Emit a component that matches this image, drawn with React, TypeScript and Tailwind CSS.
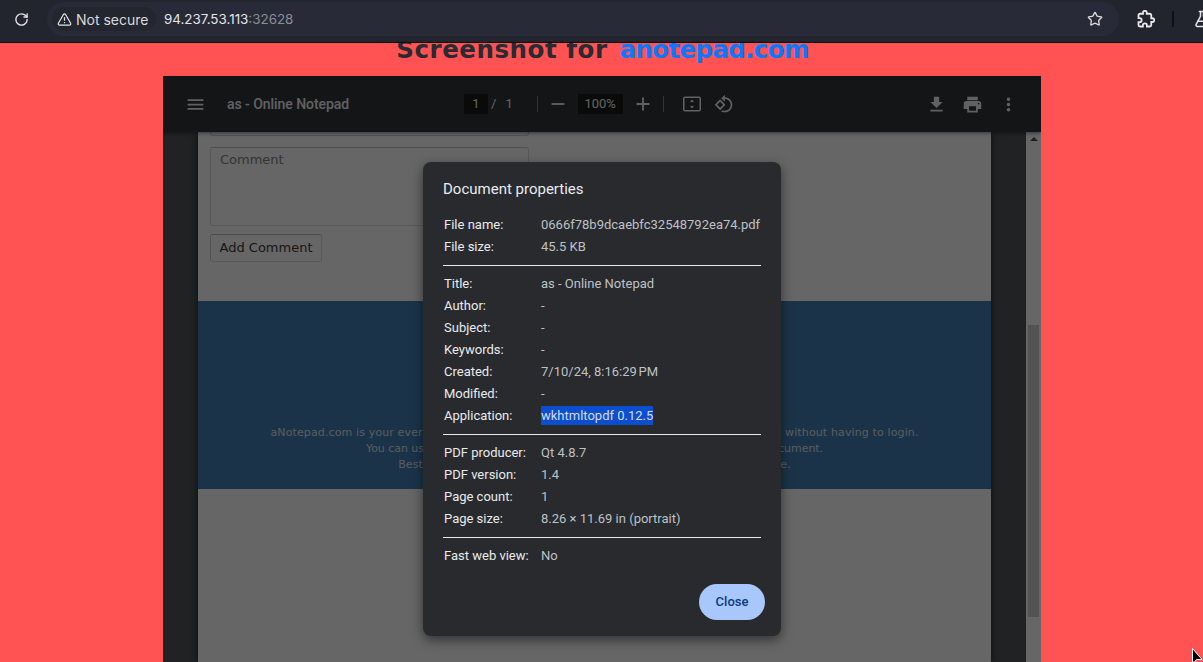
import { RotateCw, TriangleAlert, Star, FlaskConical } from "lucide-react";

const Row = ({ k, v, sel }: { k: string; v: string; sel?: boolean }) => (
  <div className="flex h-[22px] items-center pl-px">
    <div className="w-[97px] shrink-0 text-[#e8eaed]">{k}</div>
    <div className="whitespace-nowrap text-[#bdc1c6]">
      {sel ? <span className="bg-[#0b4fd0] py-[2px] text-[#d6dbe6]">{v}</span> : v}
    </div>
  </div>
);

const Hr = () => <div className="mb-[7px] mt-[7px] h-px bg-[#e8eaed]" />;

const Ico = ({ d, size = 24 }: { d: string; size?: number }) => (
  <svg width={size} height={size} viewBox="0 0 24 24" fill="#f1f3f4">
    <path d={d} />
  </svg>
);

export default function App() {
  return (
    <div className="relative flex h-[662px] w-[1203px] flex-col overflow-hidden bg-[#ff5252] font-['Roboto',sans-serif]">
      {/* browser bar */}
      <div className="z-20 flex h-[43px] shrink-0 items-start overflow-hidden border-b border-[#0c0d10] bg-[#22252e] pt-[2px] text-[#e3e4e8]">
        <div className="flex h-[34px] w-[43px] shrink-0 items-center justify-center">
          <RotateCw size={15} strokeWidth={2.2} className="text-[#e3e4e8]" />
        </div>
        <div className="ml-[4px] flex h-[34px] w-[1072px] shrink-0 items-center rounded-full bg-[#282b37] pl-[5px] pr-[16px] font-['Inter',sans-serif] text-[14px]">
          <div className="flex h-[24px] w-[104px] items-center gap-[4px] rounded-full bg-[#23262f] pl-[5px]">
            <TriangleAlert size={15} strokeWidth={2} />
            <span className="whitespace-nowrap text-[#d8d9de]">Not secure</span>
          </div>
          <div className="ml-[8px] whitespace-nowrap text-[13.4px]">
            94.237.53.113<span className="text-[#8b8d95]">:32628</span>
          </div>
          <Star size={16} strokeWidth={2} className="ml-auto text-[#d8d9de]" />
        </div>
        <div className="ml-[18px] flex h-[34px] shrink-0 items-center">
          <svg width="18" height="18" viewBox="0 0 24 24" fill="none" stroke="#e8e9ec" strokeWidth="2.4">
            <path d="M20.5 11H19V7c0-1.1-.9-2-2-2h-4V3.5C13 2.12 11.88 1 10.5 1S8 2.12 8 3.5V5H4c-1.1 0-1.99.9-1.99 2v3.8H3.5c1.49 0 2.7 1.21 2.7 2.7s-1.21 2.7-2.7 2.7H2V20c0 1.1.9 2 2 2h3.8v-1.5c0-1.49 1.21-2.7 2.7-2.7 1.49 0 2.7 1.21 2.7 2.7V22H17c1.1 0 2-.9 2-2v-4h1.5c1.38 0 2.5-1.12 2.5-2.5S21.88 11 20.5 11z" />
          </svg>
        </div>
        <div className="ml-[17px] mt-[9px] h-[16px] w-[2px] shrink-0 bg-[#0f1014]" />
        <div className="ml-[19px] flex h-[34px] shrink-0 items-center">
          <FlaskConical size={18} strokeWidth={2} />
        </div>
      </div>

      {/* page title */}
      <div className="z-10 mb-[4px] ml-[2px] mt-[-14px] flex h-[43px] shrink-0 items-center justify-center whitespace-nowrap font-['DejaVu_Sans',sans-serif] text-[24.5px] font-bold text-[#2a2a33]">
        <span className="tracking-[0.55px]">Screenshot for&nbsp;</span>
        <span className="ml-[3px] tracking-[-0.65px] text-[#0a78ff]">anotepad.com</span>
      </div>

      {/* pdf viewer */}
      <div className="relative ml-[163px] flex w-[878px] flex-1 flex-col overflow-hidden">
        <div className="z-10 flex h-[56px] shrink-0 items-center bg-[#323639] text-[#f1f3f4] shadow-[0_1px_4px_rgba(0,0,0,0.5)]">
          <div className="ml-[20px] flex w-[24px] justify-center">
            <Ico d="M3 18h18v-2H3v2zm0-5h18v-2H3v2zm0-7v2h18V6H3z" size={21} />
          </div>
          <div className="ml-[20px] w-[237px] whitespace-nowrap text-[14px] font-medium tracking-[-0.05px]">as - Online Notepad</div>
          <div className="flex h-[20px] w-[24px] items-center justify-center bg-[#191b1c] text-[13px]">1</div>
          <span className="ml-[3px] text-[13px]">/</span>
          <span className="ml-[9px] text-[13px]">1</span>
          <div className="ml-[24px] h-[16px] w-px bg-[#80868b]" />
          <div className="ml-[9px]">
            <Ico d="M19 13H5v-2h14v2z" size={22} />
          </div>
          <div className="ml-[9px] flex h-[20px] w-[45px] items-center justify-center bg-[#191b1c] text-[13px]">100%</div>
          <div className="ml-[9px]">
            <Ico d="M19 13h-6v6h-2v-6H5v-2h6V5h2v6h6v2z" size={22} />
          </div>
          <div className="ml-[9px] h-[16px] w-px bg-[#80868b]" />
          <div className="ml-[18px]">
            <svg width="20" height="20" viewBox="0 0 20 20" fill="#f1f3f4">
              <rect x="1.75" y="3.25" width="16.5" height="13.5" rx="1.2" fill="none" stroke="#f1f3f4" strokeWidth="1.5" />
              <path d="M10 5.6l2 2.4H8zM10 14.4l-2-2.4h4z" />
            </svg>
          </div>
          <div className="ml-[12px]">
            <Ico d="M7.34 6.41L.86 12.9l6.49 6.48 6.49-6.48-6.5-6.49zM3.69 12.9l3.66-3.66L11 12.9l-3.66 3.66-3.65-3.66zm15.67-6.26C17.61 4.88 15.3 4 13 4V.76L8.76 5 13 9.24V6c1.79 0 3.58.68 4.95 2.05 2.73 2.73 2.73 7.17 0 9.9C16.58 19.32 14.79 20 13 20c-.97 0-1.94-.21-2.84-.61l-1.49 1.49C10.02 21.62 11.51 22 13 22c2.3 0 4.61-.88 6.36-2.64 3.52-3.51 3.52-9.21 0-12.72z" size={20} />
          </div>
          <div className="ml-auto flex items-center gap-[15px] pr-[22px]">
            <Ico d="M19 9h-4V3H9v6H5l7 7 7-7zM5 18v2h14v-2H5z" size={21} />
            <Ico d="M19 8H5c-1.66 0-3 1.34-3 3v6h4v4h12v-4h4v-6c0-1.66-1.34-3-3-3zm-3 11H8v-5h8v5zm3-7c-.55 0-1-.45-1-1s.45-1 1-1 1 .45 1 1-.45 1-1 1zm-1-9H6v4h12V3z" size={21} />
            <Ico d="M12 8c1.1 0 2-.9 2-2s-.9-2-2-2-2 .9-2 2 .9 2 2 2zm0 2c-1.1 0-2 .9-2 2s.9 2 2 2 2-.9 2-2-.9-2-2-2zm0 6c-1.1 0-2 .9-2 2s.9 2 2 2 2-.9 2-2-.9-2-2-2z" size={21} />
          </div>
        </div>

        <div className="flex min-h-0 flex-1">
          <div className="flex min-w-0 flex-1 justify-center bg-[#525659] pl-[35px] pr-[35px]">
            <div className="w-full bg-white font-['DejaVu_Sans',sans-serif] shadow-[0_0_8px_rgba(0,0,0,0.6)]">
              <div className="ml-[12px] h-[4px] w-[319px] rounded-b-[3px] border border-t-0 border-[#d0d0d0]" />
              <div className="ml-[12px] mt-[11px] h-[79px] w-[319px] rounded-[3px] border-[1.5px] border-[#dcdcdc] border-t-[#c4c4c4] px-[9px] py-[2px] text-[13px] text-[#858585]">
                Comment
              </div>
              <div className="ml-[12px] mt-[8px] flex h-[28px] w-[112px] items-center justify-center rounded-[3px] border-[1.5px] border-[#dedede] border-l-[#cccccc] border-t-[#bdbdbd] text-[13px] text-[#3a3a3a]">
                Add Comment
              </div>
              <div className="mt-[39px] flex h-[188px] flex-col items-center bg-[#4480b7] pt-[124px] text-[11px] leading-[16px] text-[#dfe5eb]">
                <div className="whitespace-nowrap tracking-[0.13px]">aNotepad.com is your everyday online notepad. You can take notes and share them online without having to login.</div>
                <div className="whitespace-nowrap tracking-[-0.04px]">You can use rich text formatting to create, edit and share your note as a document.</div>
                <div className="whitespace-nowrap tracking-[0.13px]">Best of all, aNotepad is a fast, clean, and easy-to-use notepad online.</div>
              </div>
            </div>
          </div>
          <div className="flex w-[15px] shrink-0 flex-col items-center bg-white">
            <div className="mt-[5px] h-0 w-0 border-x-[4px] border-b-[4px] border-x-transparent border-b-[#505050]" />
            <div className="mt-[184px] h-[292px] w-[11px] bg-[#d0d0d0]" />
          </div>
        </div>

        {/* scrim */}
        <div className="absolute inset-0 z-20 bg-black/60" />

        {/* dialog */}
        <div className="absolute left-[260px] top-[86px] z-30 h-[474px] w-[358px] rounded-[8px] bg-[#292a2d] px-[20px] pt-[17px] text-[13px] shadow-[0_4px_12px_rgba(0,0,0,0.5)]">
          <div className="text-[15px] leading-[20px] text-[#e8eaed]">Document properties</div>
          <div className="mt-[15px]">
            <Row k="File name:" v="0666f78b9dcaebfc32548792ea74.pdf" />
            <Row k="File size:" v="45.5 KB" />
            <Hr />
            <Row k="Title:" v="as - Online Notepad" />
            <Row k="Author:" v="-" />
            <Row k="Subject:" v="-" />
            <Row k="Keywords:" v="-" />
            <Row k="Created:" v={"7/10/24, 8:16:29\u202fPM"} />
            <Row k="Modified:" v="-" />
            <Row k="Application:" v="wkhtmltopdf 0.12.5" sel />
            <Hr />
            <Row k="PDF producer:" v="Qt 4.8.7" />
            <Row k="PDF version:" v="1.4" />
            <Row k="Page count:" v="1" />
            <Row k="Page size:" v="8.26 × 11.69 in (portrait)" />
            <Hr />
            <Row k="Fast web view:" v="No" />
          </div>
          <div className="absolute bottom-[16px] right-[16px] flex h-[36px] w-[66px] items-center justify-center rounded-full bg-[#a8c7fa] text-[13px] font-medium text-[#0b3a82]">
            Close
          </div>
        </div>
      </div>

      {/* mouse pointer */}
      <svg className="absolute left-[1191px] top-[648px] z-40" width="12" height="14" viewBox="0 0 12 14">
        <path d="M1.5 0.5V14H3.5L5.5 11.5H11Z" fill="#000" stroke="#fff" strokeWidth="1" />
      </svg>
    </div>
  );
}
